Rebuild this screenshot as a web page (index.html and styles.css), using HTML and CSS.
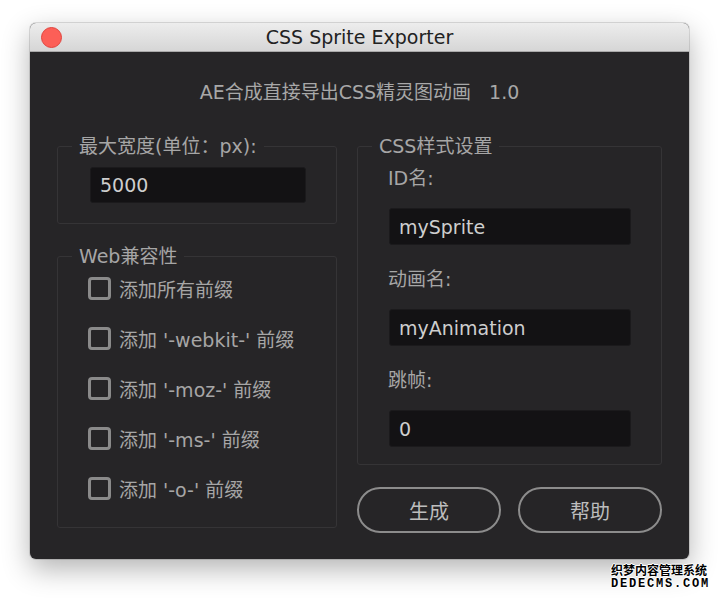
FILE: index.html
```html
<!DOCTYPE html>
<html lang="zh-CN">

<head>
    <meta charset="UTF-8">
    <meta name="viewport" content="width=device-width, initial-scale=1.0">
    <title>CSS Sprite Exporter</title>
    <link rel="stylesheet" href="styles.css">
</head>

<body>

    <div class="window">
        <header class="titlebar">
            <span class="close"></span>
            <span class="title">CSS Sprite Exporter</span>
            <span></span>
        </header>

        <main class="content">
            <p class="subtitle">AE合成直接导出CSS精灵图动画<span class="version">1.0</span></p>

            <div class="columns">
                <div class="col">
                    <fieldset class="group group-size">
                        <legend>最大宽度(单位：px):</legend>
                        <input class="field" type="text" value="5000">
                    </fieldset>

                    <fieldset class="group group-web">
                        <legend>Web兼容性</legend>
                        <label class="check"><input type="checkbox">添加所有前缀</label>
                        <label class="check"><input type="checkbox">添加 '-webkit-' 前缀</label>
                        <label class="check"><input type="checkbox">添加 '-moz-' 前缀</label>
                        <label class="check"><input type="checkbox">添加 '-ms-' 前缀</label>
                        <label class="check"><input type="checkbox">添加 '-o-' 前缀</label>
                    </fieldset>
                </div>

                <div class="col">
                    <fieldset class="group group-css">
                        <legend>CSS样式设置</legend>
                        <div class="row">
                            <span class="label">ID名:</span>
                            <input class="field" type="text" value="mySprite">
                        </div>
                        <div class="row">
                            <span class="label">动画名:</span>
                            <input class="field" type="text" value="myAnimation">
                        </div>
                        <div class="row">
                            <span class="label">跳帧:</span>
                            <input class="field" type="text" value="0">
                        </div>
                    </fieldset>

                    <div class="buttons">
                        <button>生成</button>
                        <button>帮助</button>
                    </div>
                </div>
            </div>
        </main>
    </div>

    <div class="watermark">
        <span>织梦内容管理系统</span>
        <span class="wm-url">DEDECMS.COM</span>
    </div>

</body>

</html>
```

FILE: styles.css
```css
* {
    box-sizing: border-box;
    font-family: "DejaVu Sans", "Noto Sans CJK SC", sans-serif;
}

body {
    margin: 0;
    background-color: #fff;
    height: 598px;
    overflow: hidden;
    position: relative;
}

.window {
    margin: 23px 0 0 30px;
    width: 659px;
    height: 536px;
    background-color: #262527;
    border-radius: 6px;
    overflow: hidden;
    box-shadow: 0 10px 28px rgba(0, 0, 0, 0.3), 0 0 0 1px rgba(0, 0, 0, 0.12);
}

.titlebar {
    height: 29px;
    display: grid;
    grid-template-columns: 1fr auto 1fr;
    align-items: center;
    padding: 0 11px;
    background: linear-gradient(#ededed, #d6d6d6);
    border-bottom: 1px solid #a9a9a9;
}

.close {
    width: 21px;
    height: 21px;
    border-radius: 50%;
    background-color: #fc5f57;
    border: 1px solid #e0443e;
}

.title {
    font-size: 19px;
    color: #222;
    line-height: 28px;
}

.content {
    padding: 0 27px;
}

.subtitle {
    margin: 28px 0 0;
    text-align: center;
    font-size: 19px;
    line-height: 24px;
    color: #a8a8a8;
}

.version {
    margin-left: 18px;
}

.columns {
    margin-top: 30px;
    display: grid;
    grid-template-columns: 280px 305px;
    column-gap: 20px;
    align-items: start;
}

.col {
    display: flex;
    flex-direction: column;
    gap: 20px;
}

.group {
    margin: 0;
    padding-left: 30px;
    border: 1px solid #353436;
    border-radius: 3px;
    min-width: 0;
}

/* legend follows the fieldset padding, pull it back to the corner */
.group legend {
    margin-left: -16px;
    padding: 0 7px;
    font-size: 19px;
    line-height: 24px;
    color: #a6a6a6;
}

.field {
    display: block;
    height: 37px;
    padding: 0 9px;
    background-color: #131214;
    border: 1px solid #1b1a1c;
    border-radius: 3px;
    color: #cecece;
    font-size: 19px;
    outline: none;
}

.group-size {
    padding-top: 9px;
    padding-right: 31px;
    padding-bottom: 20px;
}

.group-size .field {
    width: 216px;
    height: 36px;
    margin-left: 2px;
}

.group-web {
    padding-top: 8px;
    padding-right: 20px;
    padding-bottom: 27px;
    display: flex;
    flex-direction: column;
    gap: 26px;
}

.check {
    display: flex;
    align-items: center;
    gap: 8px;
    height: 24px;
    font-size: 19px;
    color: #a6a6a6;
}

.check input {
    appearance: none;
    margin: 0;
    width: 23px;
    height: 23px;
    border: 3px solid #8a8a8a;
    border-radius: 4px;
    background: transparent;
}

.group-css {
    padding-top: 8px;
    padding-right: 31px;
    padding-bottom: 17px;
    display: flex;
    flex-direction: column;
    gap: 22px;
}

.row .label {
    display: block;
    font-size: 19px;
    line-height: 24px;
    color: #a6a6a6;
    margin-bottom: 18px;
}

.row .field {
    width: 242px;
    margin-left: 1px;
}

.buttons {
    margin-top: 2px;
    display: grid;
    grid-template-columns: 1fr 1fr;
    gap: 17px;
}

.buttons button {
    height: 46px;
    border: 2.5px solid #8c8c8c;
    border-radius: 23px;
    background: transparent;
    color: #bdbdbd;
    font-size: 20px;
    font-family: "Noto Sans CJK SC", sans-serif;
}

.watermark {
    position: absolute;
    left: 611px;
    top: 563px;
    display: flex;
    flex-direction: column;
    line-height: 13px;
    font-size: 12px;
    font-weight: bold;
    color: #000;
    text-shadow: 1px 0 #fff, -1px 0 #fff, 0 1px #fff, 0 -1px #fff;
}

.watermark span {
    font-family: "Noto Sans CJK SC", sans-serif;
}

.watermark .wm-url {
    margin-top: 2px;
    font-family: "Liberation Mono", monospace;
    letter-spacing: 1.8px;
}
```
